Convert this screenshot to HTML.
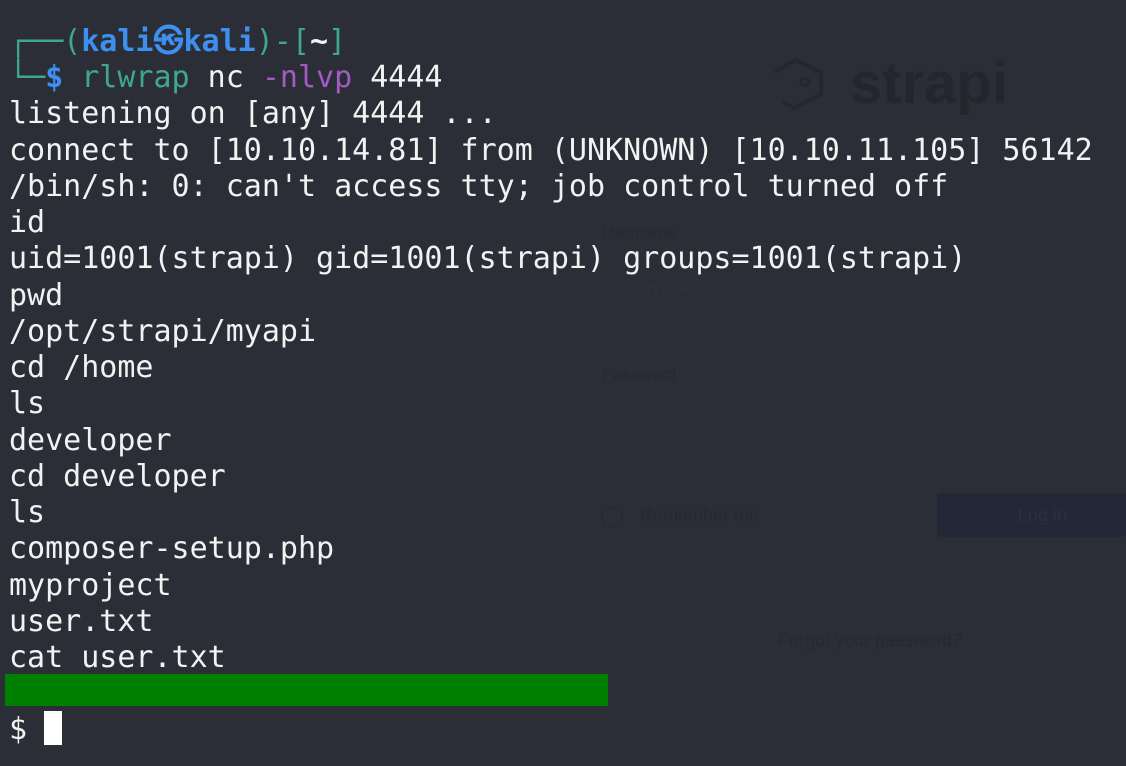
<!DOCTYPE html>
<html><head><style>
html,body{margin:0;padding:0;}
body{width:1126px;height:766px;background:#2b2e37;overflow:hidden;position:relative;font-family:"DejaVu Sans Mono","Liberation Mono",monospace;}
.t{position:absolute;left:9px;top:24px;font-size:30px;line-height:36.24px;color:#f2f2f2;white-space:pre;}
.g{color:#3fa88a}.b{color:#3d8ff0;font-weight:bold}.p{color:#a35bc2}.w{color:#f2f2f2}
.f{position:absolute;font-family:"Liberation Sans",sans-serif;color:#262930;}
</style></head><body>
<div class="f" style="left:850px;top:50px;font-size:58px;font-weight:bold;color:#23262d;">strapi</div>
<svg style="position:absolute;left:765px;top:58px" width="62" height="56" viewBox="0 0 62 56"><path d="M10 14 L30 2 L56 14 L56 36 L30 50 L18 44" fill="none" stroke="#24272e" stroke-width="4"/><circle cx="40" cy="24" r="4" fill="none" stroke="#24272e" stroke-width="3"/></svg>
<div class="f" style="left:602px;top:225px;font-size:16px;">Username</div>
<div class="f" style="left:620px;top:279px;font-size:17px;color:#2f323b">John Doe</div>
<div class="f" style="left:602px;top:365px;font-size:17px;">Password</div>
<div style="position:absolute;left:602px;top:507px;width:18px;height:18px;border:1px solid #252830;border-radius:3px"></div>
<div class="f" style="left:640px;top:505px;font-size:18px;">Remember me</div>
<div style="position:absolute;left:937px;top:493px;width:189px;height:44px;background:#232837;border-radius:3px"></div>
<div class="f" style="left:1018px;top:505px;font-size:18px;color:#283046">Log in</div>
<div class="f" style="left:778px;top:630px;font-size:18px;">Forgot your password?</div>
<div style="position:absolute;left:5px;top:674px;width:603px;height:32px;background:#008000"></div>
<div style="position:absolute;left:44px;top:711px;width:18px;height:34px;background:#fff"></div>
<div class="t"><span class="g">┌──(</span><span class="b">kali㉿kali</span><span class="g">)-[</span><span class="w" style="font-weight:bold">~</span><span class="g">]</span>
<span class="g">└─</span><span class="b">$</span> <span class="g">rlwrap</span> nc <span class="p">-nlvp</span> 4444
listening on [any] 4444 ...
connect to [10.10.14.81] from (UNKNOWN) [10.10.11.105] 56142
/bin/sh: 0: can't access tty; job control turned off
id
uid=1001(strapi) gid=1001(strapi) groups=1001(strapi)
pwd
/opt/strapi/myapi
cd /home
ls
developer
cd developer
ls
composer-setup.php
myproject
user.txt
cat user.txt

$ </div>
</body></html>
